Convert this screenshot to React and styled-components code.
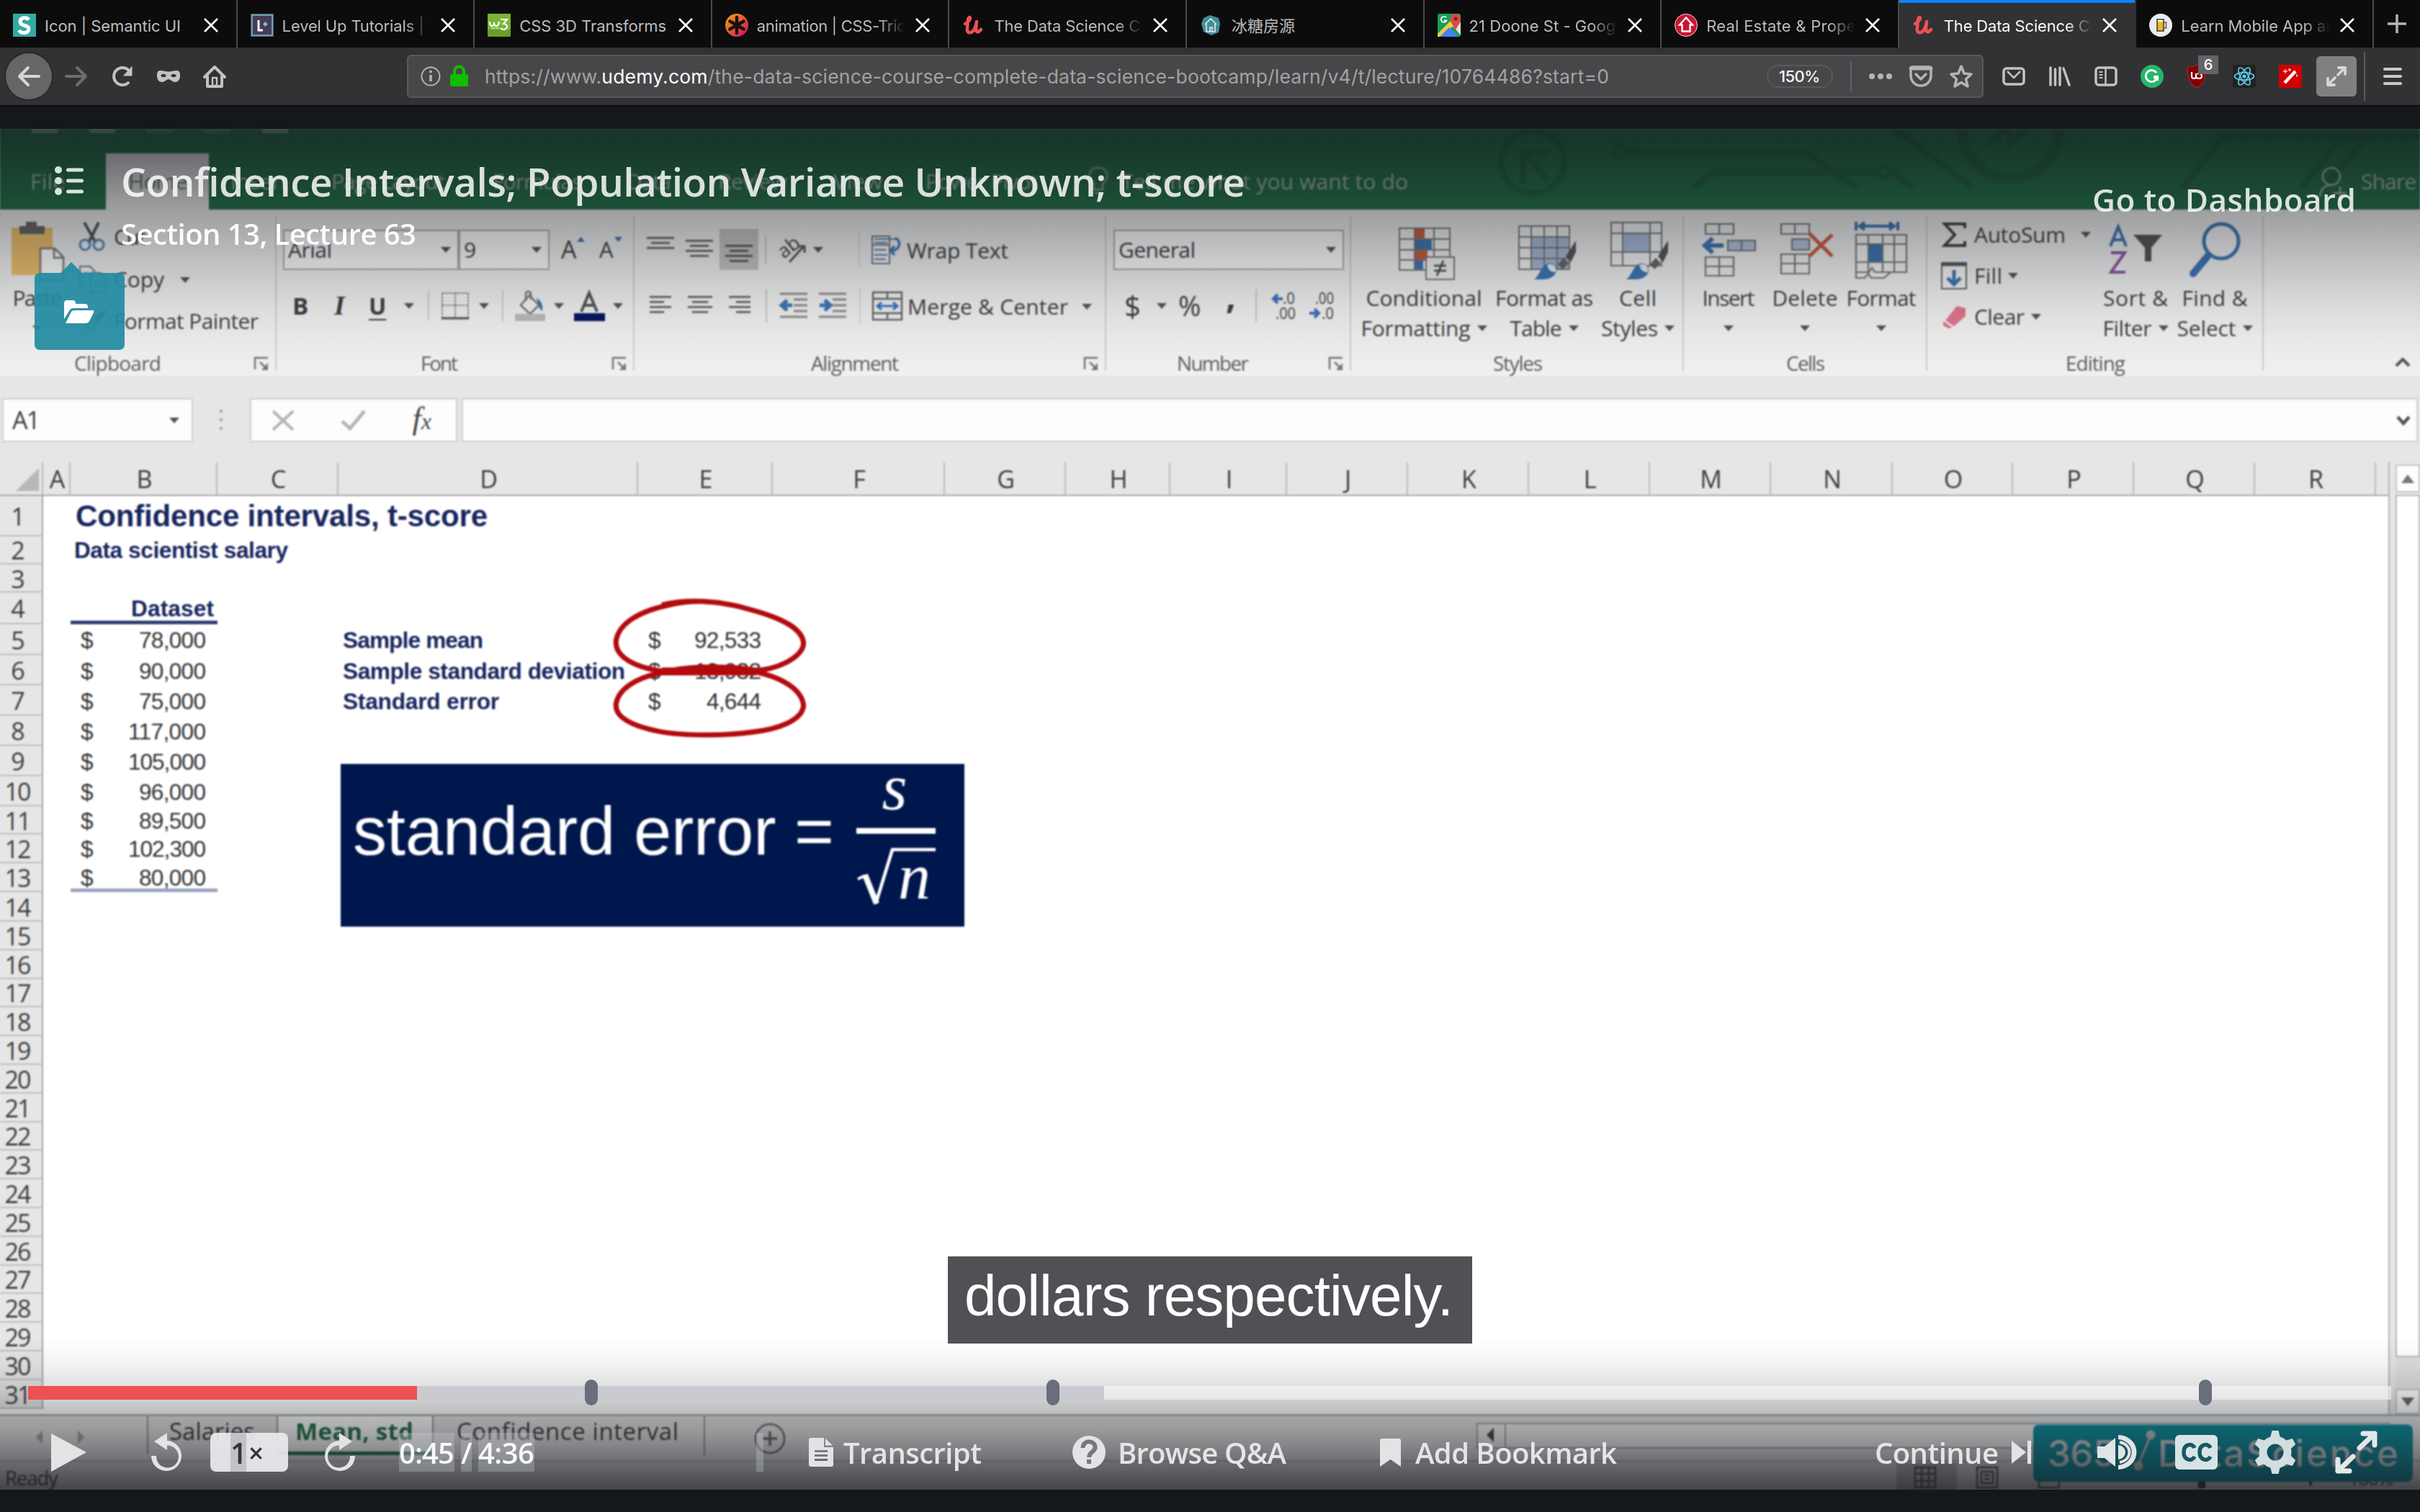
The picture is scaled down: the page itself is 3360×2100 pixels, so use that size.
import React, { useLayoutEffect, useRef } from "react";
import styled, { createGlobalStyle, css } from "styled-components";

const Global = createGlobalStyle`
  * { box-sizing: border-box; }
  body { margin: 0; background: #14171c; overflow: hidden; }
  svg { display: block; flex: none; overflow: visible; }
`;

const ui = '"Inter", "Noto Sans CJK SC", sans-serif';
const office = '"Open Sans", "Noto Sans", sans-serif';
const arial = '"Liberation Sans", Arial, sans-serif';

/* ---------- text that spreads its letters over a known width ---------- */
const FitBox = styled.span`
  display: block;
  flex: none;
  white-space: nowrap;
  ${(p) => p.$w && css`width: ${p.$w}px;`}
  ${(p) => p.$ml && css`margin-left: ${p.$ml}px;`}
`;
function Fit({ w, ml, children, className }) {
  const ref = useRef(null);
  useLayoutEffect(() => {
    const el = ref.current;
    el.style.letterSpacing = "0px";
    const natural = el.getBoundingClientRect().width;
    const gaps = Math.max(1, el.textContent.length - 1);
    el.style.letterSpacing = (w - natural) / gaps + "px";
  }, [w, children]);
  return (
    <FitBox $w={w} $ml={ml} className={className}>
      <span ref={ref}>{children}</span>
    </FitBox>
  );
}

const Page = styled.div`
  width: 3360px;
  height: 2100px;
  display: flex;
  flex-direction: column;
  background: #14171c;
  overflow: hidden;
`;

/* ================= browser chrome ================= */
const TabBar = styled.div`
  height: 66px;
  display: flex;
  background: #0c0c0d;
  font-family: ${ui};
`;
const TabBox = styled.div`
  width: 329.6px;
  height: 66px;
  padding: 4px 25px 0 18px;
  display: flex;
  align-items: center;
  border-right: 2px solid ${(p) => (p.$active ? "transparent" : "#4b4b4d")};
  background: ${(p) => (p.$active ? "#323234" : "#0c0c0d")};
  box-shadow: ${(p) => (p.$active ? "inset 0 4px #0a84ff" : "none")};
  color: ${(p) => (p.$active ? "#f9f9fa" : "#bcbcbe")};
`;
const TabTitle = styled.div`
  width: 214px;
  margin-left: 12px;
  overflow: hidden;
  font-size: 22px;
  line-height: 32px;
  padding-top: 2px;
  mask-image: linear-gradient(90deg, #000 80%, transparent 97%);
  ${(p) => p.$short && css`mask-image: none;`}
`;
const NewTab = styled.div`
  flex: 1;
  display: flex;
  align-items: center;
  justify-content: center;
`;
const CloseX = styled.svg`
  margin-left: 8px;
  stroke: #fff;
  stroke-width: 2.6;
`;

const Toolbar = styled.div`
  height: 82px;
  border-bottom: 2px solid #0c0c0d;
  background: #323234;
  display: flex;
  align-items: center;
  font-family: ${ui};
`;
const Back = styled.div`
  width: 64px;
  height: 64px;
  margin: 0 18px 0 8px;
  border-radius: 50%;
  background: #666667;
  box-shadow: 0 0 0 2px #29292b;
  display: grid;
  place-items: center;
`;
const NavIcons = styled.div`
  display: flex;
  gap: 32px;
  width: 475px;
`;
const UrlBar = styled.div`
  width: 2189px;
  height: 60px;
  border: 2px solid #59595b;
  border-radius: 6px;
  background: #474749;
  display: flex;
  align-items: center;
  padding-left: 17px;
  color: #a2a2a4;
  font-size: 26.500px;
  b { color: #fff; font-weight: 400; }
`;
const LockIcon = styled.svg`
  margin-left: 13px;
`;
const Zoom = styled.div`
  width: 92px;
  height: 32px;
  margin-left: 219px;
  border: 2px solid #58585a;
  border-radius: 16px;
  color: #f4f4f5;
  font-size: 22px;
  font-weight: 500;
  line-height: 29px;
  padding-left: 15px;
`;
const VRule = styled.i`
  display: block;
  flex: none;
  width: 2px;
  height: ${(p) => p.$h}px;
  margin-left: ${(p) => p.$ml || 0}px;
  background: ${(p) => p.$c || "#5c5c60"};
`;
const UrlActions = styled.div`
  display: flex;
  align-items: center;
  gap: 24px;
  margin-left: 24px;
`;
const Extensions = styled.div`
  display: flex;
  align-items: center;
  gap: 32px;
  margin-left: 26px;
`;
const ExtBadge = styled.div`
  position: relative;
  width: 32px;
  height: 34px;
`;
const BadgeCount = styled.span`
  position: absolute;
  left: 16px;
  top: -12px;
  width: 28px;
  height: 26px;
  background: #646466;
  color: #fff;
  font-size: 20px;
  font-weight: 500;
  line-height: 27px;
  text-align: center;
`;
const ExpandBtn = styled.div`
  width: 56px;
  height: 56px;
  margin-left: -12px;
  border-radius: 6px;
  background: #808081;
  display: grid;
  place-items: center;
`;

const UdemyU = () => (
  <svg width="32" height="32" viewBox="0 0 32 32" fill="none" stroke="#ec5252" strokeWidth="4.5" strokeLinecap="round" strokeLinejoin="round">
    <path d="M4 14C8 12 11 8 11 6c0-2-3-1-3 3l-1 10c-1 7 2 8 5 7 4-1 7-8 8-15l-1 10c0 5 3 6 7 1" />
  </svg>
);
const favicons = {
  semantic: (
    <svg width="32" height="32" viewBox="0 0 32 32">
      <rect width="32" height="32" fill="#35aaa3" />
      <path d="M22 8.5C19 4 10 5 10 11c0 7 12 4 12 10 0 7-11 7-13.500 2" fill="none" stroke="#fff" strokeWidth="5" />
    </svg>
  ),
  levelup: (
    <svg width="32" height="32" viewBox="0 0 32 32">
      <rect width="32" height="32" fill="#5c5474" />
      <rect x="2" y="2" width="28" height="28" fill="#453c56" stroke="#6cc5c8" strokeWidth="1.500" />
      <path d="M11 9v14h6" fill="none" stroke="#fff" strokeWidth="3" />
      <path d="M20 11l4 3.500-4 3.500-3-3.500z" fill="#6cc5c8" />
    </svg>
  ),
  w3: (
    <svg width="32" height="32" viewBox="0 0 32 32">
      <rect width="32" height="32" fill="#7ab535" />
      <path d="M0 22h32v10H0z" fill="#689d2c" />
      <path d="M3 11c0 8 6 8 6 1 0 7 6 7 7-1M18 8h9l-5 6c7 0 6 8 0 8-2 0-3-1-4-2" fill="none" stroke="#fff" strokeWidth="2.200" />
      <path d="M5 20h11" stroke="#e6f2d6" strokeWidth="1.500" strokeDasharray="2 1" />
    </svg>
  ),
  tricks: (
    <svg width="32" height="32" viewBox="0 0 32 32">
      <defs>
        <linearGradient id="trk" x1="0" y1="0" x2="1" y2="1">
          <stop offset=".2" stopColor="#f08a12" />
          <stop offset=".85" stopColor="#d8195f" />
        </linearGradient>
      </defs>
      <circle cx="16" cy="16" r="16" fill="url(#trk)" />
      <path d="M16 5v22M6.500 10.500l19 11M25.500 10.500l-19 11" stroke="#16100c" strokeWidth="4.500" strokeLinecap="round" />
    </svg>
  ),
  udemy: <UdemyU />,
  house: (
    <svg width="32" height="32" viewBox="0 0 32 32">
      <path d="M14 2l12 4 2 8-2 12-10 4-11-5-3-11 3-8z" fill="#438c96" />
      <path d="M7 15l8-8 8 8M9 14v11h12V14M14 25v-6h3v6" fill="none" stroke="#d9eef0" strokeWidth="1.600" />
    </svg>
  ),
  maps: (
    <svg width="32" height="32" viewBox="0 0 32 32">
      <rect width="32" height="32" rx="3" fill="#1c9d58" />
      <path d="M0 28L20 8l3 8L4 32H0z" fill="#f6c944" />
      <path d="M20 16l12 14V12h-8z" fill="#dfdfdf" />
      <path d="M16 19L3 32h27z" fill="#4484f3" />
      <path d="M25 24c-1-7-7-9-7-16a7 8 0 0 1 14 0c0 7-6 9-7 16z" fill="#dc4a3d" />
      <circle cx="25" cy="7" r="2.600" fill="#7c231c" />
      <path d="M12 5.500a4 4 0 1 0 .5 4H8.500" fill="none" stroke="#fff" strokeWidth="1.700" />
    </svg>
  ),
  realestate: (
    <svg width="32" height="32" viewBox="0 0 32 32">
      <circle cx="16" cy="16" r="15.500" fill="#ca1430" stroke="#f3d8dc" />
      <path d="M16 5.500L7 15.500h3.500v9h11v-9H25z" fill="none" stroke="#fff" strokeWidth="2.400" />
    </svg>
  ),
  beer: (
    <svg width="32" height="32" viewBox="0 0 32 32">
      <circle cx="16" cy="16" r="16" fill="#ebebeb" />
      <rect x="11" y="8" width="9" height="16" fill="#f0b71c" stroke="#333" strokeWidth="1.500" />
      <path d="M12 10h7" stroke="#fff" strokeWidth="2.500" />
      <path d="M20 12h3.500v8H20" fill="none" stroke="#555" strokeWidth="1.500" />
    </svg>
  ),
};

const tabs = [
  ["semantic", "Icon | Semantic UI", 189],
  ["levelup", "Level Up Tutorials | V", 218],
  ["w3", "CSS 3D Transforms", 204],
  ["tricks", "animation | CSS-Tricks", 230],
  ["udemy", "The Data Science Co", 216],
  ["house", "冰糖房源", 88],
  ["maps", "21 Doone St - Google", 222],
  ["realestate", "Real Estate & Proper", 216],
  ["udemy", "The Data Science Co", 216, true],
  ["beer", "Learn Mobile App an", 214],
];

function Browser() {
  return (
    <>
      <TabBar>
        {tabs.map(([icon, title, w, active], i) => (
          <TabBox key={i} $active={active}>
            {favicons[icon]}
            <TabTitle $short={w < 210}><Fit w={w}>{title}</Fit></TabTitle>
            <CloseX width="20" height="20" viewBox="0 0 20 20"><path d="M1 1l18 18M19 1L1 19" /></CloseX>
          </TabBox>
        ))}
        <NewTab>
          <svg width="28" height="28" viewBox="0 0 28 28"><path d="M14 1v26M1 14h26" stroke="#b4b4b6" strokeWidth="3.500" /></svg>
        </NewTab>
      </TabBar>
      <Toolbar>
        <Back>
          <svg width="32" height="32" viewBox="0 0 32 32" fill="none" stroke="#d6d6d7" strokeWidth="4" strokeLinecap="round" strokeLinejoin="round"><path d="M30 16H3M15 4L3 16l12 12" /></svg>
        </Back>
        <NavIcons>
          <svg width="32" height="32" viewBox="0 0 32 32" fill="none" stroke="#6d6d6f" strokeWidth="4" strokeLinecap="round" strokeLinejoin="round"><path d="M2 16h27M17 4l12 12-12 12" /></svg>
          <svg width="32" height="32" viewBox="0 0 32 32" fill="none" stroke="#c2c2c3" strokeWidth="4" strokeLinecap="round"><path d="M24 25a12 12 0 1 1 1-17" /><path d="M29 3v12H18z" fill="#c2c2c3" strokeWidth="1" /></svg>
          <svg width="32" height="32" viewBox="0 0 32 32"><path fillRule="evenodd" fill="#c2c2c3" d="M0 15c0-5 1-7 5-7s7 1.500 11 1.500S23 8 27 8s5 2 5 7c0 6-3 9-7 9-4 0-6-4-9-4s-5 4-9 4c-4 0-7-3-7-9zm5 0c2 3 6 3 8 0-2-3-6-3-8 0zm14 0c2 3 6 3 8 0-2-3-6-3-8 0z" /></svg>
          <svg width="32" height="32" viewBox="0 0 32 32" fill="none" stroke="#c2c2c3" strokeWidth="4" strokeLinejoin="round" strokeLinecap="round"><path d="M2 17L16 3l14 14M6 16v14h20V16" /><rect x="13" y="18" width="6" height="11" strokeWidth="2.500" /></svg>
        </NavIcons>
        <UrlBar>
          <svg width="28" height="28" viewBox="0 0 28 28" fill="none" stroke="#b4b4b6" strokeWidth="2"><circle cx="14" cy="14" r="12.500" /><path d="M14 12v9" strokeWidth="3.500" /><circle cx="14" cy="7.500" r="2" fill="#b4b4b6" stroke="none" /></svg>
          <LockIcon width="26" height="30" viewBox="0 0 26 30"><path d="M6 13V8a6.500 6.500 0 0 1 13 0v5" fill="none" stroke="#12bc00" strokeWidth="4" /><rect y="12" width="25" height="17" rx="2.500" fill="#12bc00" /></LockIcon>
          <Fit w={1561} ml={22}>https://www.<b>udemy.com</b>/the-data-science-course-complete-data-science-bootcamp/learn/v4/t/lecture/10764486?start=0</Fit>
          <Zoom><Fit w={57}>150%</Fit></Zoom>
          <VRule $h={42} $ml={24} $c="#5a6072" />
          <UrlActions>
            <svg width="32" height="32" viewBox="0 0 32 32" fill="#b4b4b6"><circle cx="4" cy="16" r="4" /><circle cx="16" cy="16" r="4" /><circle cx="28" cy="16" r="4" /></svg>
            <svg width="32" height="32" viewBox="0 0 32 32" fill="none" stroke="#b4b4b6" strokeWidth="3.500" strokeLinecap="round" strokeLinejoin="round"><path d="M2 5c0-1 1-2 2-2h24c1 0 2 1 2 2v10a14 14 0 0 1-28 0z" /><path d="M2 5h28" strokeWidth="5" /><path d="M9 13l7 7 7-7" /></svg>
            <svg width="32" height="32" viewBox="0 0 32 32" fill="none" stroke="#b4b4b6" strokeWidth="3.500" strokeLinejoin="round"><path d="M16 2l4 10 10 1-7.500 7L25 30l-9-5.500L7 30l2.500-10L2 13l10-1z" /></svg>
          </UrlActions>
        </UrlBar>
        <Extensions>
          <svg width="32" height="32" viewBox="0 0 32 32" fill="none" stroke="#c2c2c3" strokeWidth="3.500" strokeLinejoin="round"><rect x="2" y="5" width="28" height="22" rx="4" /><path d="M7 9l9 9 9-9" strokeWidth="2.500" /></svg>
          <svg width="32" height="32" viewBox="0 0 32 32" fill="none" stroke="#c2c2c3" strokeWidth="3.500" strokeLinecap="round"><path d="M3 4v24M9.500 6v22M16 4v24M21 5l8 23" /></svg>
          <svg width="32" height="32" viewBox="0 0 32 32" fill="none" stroke="#c2c2c3" strokeWidth="3.500"><rect x="2" y="4" width="28" height="24" rx="4" /><path d="M15.500 4v24" strokeWidth="2.500" /><path d="M6.500 10h5M6.500 14h5M6.500 18h5" strokeWidth="2" /></svg>
          <svg width="32" height="32" viewBox="0 0 32 32"><circle cx="16" cy="16" r="16" fill="#27b56d" /><path d="M22 11a8 8 0 1 0 1 7h-5" fill="none" stroke="#fff" strokeWidth="2.800" /><path d="M24 22v-6h-6" fill="none" stroke="#fff" strokeWidth="2" /></svg>
          <ExtBadge>
            <svg width="28" height="34" viewBox="0 0 28 34"><path d="M14 1c5 3 9 3 13 3 0 14-2 23-13 29C3 27 1 18 1 4c4 0 8 0 13-3z" fill="#800000" stroke="#a33" strokeWidth="1" /><path d="M7 11v6c0 4 6 4 6 0v-4 4c0 4 8 4 8 0s-4-5-6-3" fill="none" stroke="#fff" strokeWidth="2.200" /></svg>
            <BadgeCount>6</BadgeCount>
          </ExtBadge>
          <svg width="32" height="32" viewBox="0 0 32 32"><rect width="32" height="32" rx="3" fill="#212121" /><g fill="none" stroke="#5ccfee" strokeWidth="1.700"><ellipse cx="16" cy="16" rx="13.500" ry="5.200" /><ellipse cx="16" cy="16" rx="13.500" ry="5.200" transform="rotate(60 16 16)" /><ellipse cx="16" cy="16" rx="13.500" ry="5.200" transform="rotate(120 16 16)" /></g><circle cx="16" cy="16" r="2.600" fill="#5ccfee" /></svg>
          <svg width="32" height="32" viewBox="0 0 32 32"><rect width="32" height="32" rx="2" fill="#cf0000" /><path d="M8 25L23 9" stroke="#fff" strokeWidth="4.500" /><path d="M9 6v6M6 9h6M15 5v4M13 7h4M25 13v4" stroke="#ffd0d0" strokeWidth="1.400" /></svg>
          <ExpandBtn>
            <svg width="30" height="30" viewBox="0 0 30 30" fill="none" stroke="#d6d6d7" strokeWidth="3.800" strokeLinecap="round" strokeLinejoin="round"><path d="M17 13L27 3M18 3h9v9M13 17L3 27M3 18v9h9" /></svg>
          </ExpandBtn>
        </Extensions>
        <VRule $h={68} $ml={10} />
        <svg width="76" height="28" viewBox="0 0 76 28"><path d="M27 4h22M27 14h22M27 24h22" stroke="#c9c9ca" strokeWidth="4" strokeLinecap="round" /></svg>
      </Toolbar>
    </>
  );
}

/* ================= spreadsheet inside the video ================= */
const Stage = styled.main`
  position: relative;
  height: 1890px;
  margin-top: 31px;
  overflow: hidden;
  background: #e6e6e6;
`;
const Excel = styled.div`
  height: 1890px;
  display: flex;
  flex-direction: column;
  font-family: ${office};
  color: #3f3f3f;
  filter: blur(0.8px);
`;
const GreenBar = styled.header`
  position: relative;
  height: 112px;
  flex: none;
  background: #217346;
  overflow: hidden;
`;
const Circuit = styled.svg`
  position: absolute;
  left: 0;
  top: 0;
  fill: none;
  stroke: #1d653f;
`;
const QuickIcons = styled.div`
  display: flex;
  height: 34px;
  padding-left: 44px;
  gap: 44px;
`;
const QuickIcon = styled.i`
  width: 36px;
  height: 6px;
  background: ${(p) => (p.$dim ? "#5c937a" : "#a4c4b4")};
  opacity: 0.7;
`;
const RibbonTabs = styled.nav`
  display: flex;
  height: 78px;
  font-size: 30px;
  line-height: 78px;
  color: #a9c3b5;
  position: relative;
`;
const HomeTab = styled.div`
  width: 143px;
  margin-left: 57px;
  padding-left: 31px;
  background: #f1f1f1;
  color: #6b7f75;
`;
const ShareIcon = styled.svg`
  margin-left: 1265px;
`;

const Ribbon = styled.section`
  height: 231px;
  flex: none;
  background: #f1f1f1;
  display: flex;
  font-size: 30px;
`;
const GroupBox = styled.div`
  width: ${(p) => p.$w}px;
  flex: none;
  display: flex;
  flex-direction: column;
  background: linear-gradient(#cfcfcf, #cfcfcf) right 0 top 10px / 2px 214px no-repeat;
`;
const GroupBody = styled.div`
  height: 193px;
  display: flex;
`;
const GroupLabel = styled.div`
  height: 38px;
  display: flex;
  align-items: center;
  justify-content: space-between;
  padding: 3px 10px 0 ${(p) => p.$pl}px;
  font-size: 28px;
  line-height: 35px;
  color: #5e5e5e;
`;
const Launcher = () => (
  <svg width="22" height="20" viewBox="0 0 22 20" fill="none" stroke="#777" strokeWidth="2.500"><path d="M2 18V2h18" /><path d="M9 8l10 10" /><path d="M20 9v10H11z" fill="#777" stroke="none" /></svg>
);
function Group({ w, label, lw, pl, launcher, children }) {
  return (
    <GroupBox $w={w}>
      <GroupBody>{children}</GroupBody>
      <GroupLabel $pl={pl}><Fit w={lw}>{label}</Fit>{launcher && <Launcher />}</GroupLabel>
    </GroupBox>
  );
}
const ArrowSvg = styled.svg`
  margin-left: ${(p) => p.$ml || 0}px;
  margin-top: ${(p) => p.$mt || 0}px;
`;
const Arrow = ({ ml, mt, c = "#555" }) => (
  <ArrowSvg $ml={ml} $mt={mt} width="14" height="8" viewBox="0 0 14 8"><path d="M0 0h14L7 8z" fill={c} /></ArrowSvg>
);
const Item = styled.div`
  flex: none;
  margin-left: ${(p) => p.$ml || 0}px;
  width: ${(p) => p.$w}px;
`;
const ListCol = styled.div`
  padding-top: ${(p) => p.$pt || 9}px;
  margin-left: ${(p) => p.$ml}px;
  width: ${(p) => p.$w}px;
  flex: none;
`;
const ListRow = styled.div`
  height: ${(p) => p.$h || 58.5}px;
  display: flex;
  align-items: center;
  line-height: 40px;
`;
const BigButton = styled.div`
  width: ${(p) => p.$w}px;
  margin-left: ${(p) => p.$ml}px;
  flex: none;
  padding-top: 17px;
  display: flex;
  flex-direction: column;
  align-items: center;
  line-height: 42px;
`;
const BigIcon = styled.div`
  height: 80px;
  margin-bottom: 5px;
`;
const Line = styled.div`
  height: 42px;
  display: flex;
  align-items: center;
  gap: 9px;
`;
const TwoRows = styled.div`
  padding-top: 28px;
  display: flex;
  flex-direction: column;
  gap: 23px;
`;
const Tools = styled.div`
  height: 55px;
  display: flex;
  align-items: center;
  line-height: 55px;
`;
const ToolText = styled(Fit)`
  padding-top: 2px;
`;
const Combo = styled.div`
  width: ${(p) => p.$w}px;
  height: 56px;
  margin-left: ${(p) => p.$ml || 0}px;
  border: 2px solid #ababab;
  background: #fff;
  display: flex;
  align-items: center;
  justify-content: space-between;
  padding: 0 9px 0 5px;
  line-height: 52px;
`;
const Letter = styled.span`
  width: ${(p) => p.$w}px;
  margin-left: ${(p) => p.$ml || 0}px;
  margin-top: ${(p) => p.$mt || 0}px;
  flex: none;
  font-size: ${(p) => p.$s || 33}px;
  ${(p) => p.$b && css`font-weight: 700;`}
  ${(p) => p.$i && css`font-style: italic; font-family: "Liberation Serif", serif; font-weight: 700;`}
  ${(p) => p.$u && css`text-decoration: underline; text-underline-offset: 6px; text-decoration-thickness: 2px;`}
  ${(p) => p.$c && css`color: ${p.$c};`}
`;
const Selected = styled.div`
  width: 54px;
  height: 57px;
  margin-left: 9px;
  background: #c5c5c5;
  display: grid;
  place-items: center;
  padding-top: 14px;
`;

const Bars = ({ widths, step = 7, w = 38, align = "c", c = "#666" }) => (
  <svg width={w} height={widths.length * step} viewBox={`0 0 ${w} ${widths.length * step}`}>
    {widths.map((v, i) => (
      <rect key={i} x={align === "l" ? 0 : align === "r" ? w - v : (w - v) / 2} y={i * step} width={v} height="2.800" fill={c} />
    ))}
  </svg>
);
const Indent = ({ right }) => (
  <svg width="38" height="38" viewBox="0 0 38 38"><path d="M0 2h38M19 10h19M19 18h19M19 26h19M0 34h38" stroke="#8c8c8c" strokeWidth="3" /><path d={right ? "M1 18h13M8 11l8 7-8 7" : "M17 18H4M10 11l-8 7 8 7"} fill="none" stroke="#3d76b4" strokeWidth="5" /></svg>
);
const Decimals = ({ up }) => (
  <svg width="34" height="40" viewBox="0 0 34 40" fontFamily="Open Sans, sans-serif" fontSize="21" fill="#444">
    {up ? <text x="15" y="17" textLength="17" lengthAdjust="spacingAndGlyphs">.0</text> : <text x="8" y="17" textLength="26" lengthAdjust="spacingAndGlyphs">.00</text>}
    {up ? <text x="5" y="38" textLength="28" lengthAdjust="spacingAndGlyphs">.00</text> : <text x="17" y="38" textLength="17" lengthAdjust="spacingAndGlyphs">.0</text>}
    <path d={up ? "M15 10H3M8 4l-6 6 6 6" : "M0 30h12M7 24l6 6-6 6"} fill="none" stroke="#3f74bd" strokeWidth="4" />
  </svg>
);
const Brush = () => (
  <g>
    <path d="M80 26L66 48l7 8 7-14z" fill="#555" />
    <path d="M63 50l-8 9 6 7 9-8z" fill="#666" />
    <path d="M22 80c8-4 10-24 24-22 12 3 8 18-4 21-6 1.500-12 1-20 1z" fill="#3d76b4" />
    <path d="M40 60c2 8 6 10 12 10 2-8-4-14-12-10z" fill="#eef3f8" />
  </g>
);

function RibbonArea() {
  return (
    <Ribbon>
      <Group w={384} label="Clipboard" lw={121} pl={103} launcher>
        <BigButton $w={74} $ml={15}>
          <BigIcon>
            <svg width="72" height="80" viewBox="0 0 72 80"><path d="M0 8h57v66H0z" fill="#eec06a" /><path d="M11 6h9V0h15v6h11v11H11z" fill="#666" /><path d="M40 37h20l12 12v32H40z" fill="#fff" stroke="#777" strokeWidth="2.500" /><path d="M59 37v13h13" fill="none" stroke="#777" strokeWidth="2.500" /></svg>
          </BigIcon>
          <Line><Fit w={69}>Paste</Fit></Line>
          <Line><Arrow /></Line>
        </BigButton>
        <ListCol $ml={21} $w={260}>
          <ListRow>
            <svg width="36" height="40" viewBox="0 0 36 40" fill="none" strokeWidth="3"><path d="M7 0l16 28M27 0L13 28" stroke="#555" strokeWidth="4" /><circle cx="8" cy="31" r="7" stroke="#4f87bf" /><circle cx="27" cy="31" r="7" stroke="#4f87bf" /></svg>
            <Fit w={45} ml={12}>Cut</Fit>
          </ListRow>
          <ListRow>
            <svg width="38" height="38" viewBox="0 0 38 38" fill="#eef3f8" stroke="#777" strokeWidth="2"><path d="M1 1h14l6 6v21H1z" /><path d="M16 10h14l7 7v20H16z" /><path d="M5 10h9M5 16h9M20 22h12M20 28h12" stroke="#5b8fc4" /></svg>
            <Fit w={70} ml={10}>Copy</Fit><Arrow ml={22} mt={2} />
          </ListRow>
          <ListRow>
            <svg width="38" height="32" viewBox="0 0 38 32"><path d="M6 20l10-8 10 10-8 10-12-4z" fill="#e6bf7b" /><path d="M20 12l8-8 6 6-8 8z" fill="#666" /><path d="M30 5l5-5 3 3-5 5z" fill="#555" /></svg>
            <Fit w={201} ml={10}>Format Painter</Fit>
          </ListRow>
        </ListCol>
      </Group>

      <Group w={497} label="Font" lw={52} pl={200} launcher>
        <TwoRows>
          <Tools>
            <Combo $w={244} $ml={9}><Fit w={61}>Arial</Fit><Arrow /></Combo>
            <Combo $w={126}><span>9</span><Arrow /></Combo>
            <Letter $w={22} $ml={16} $s={34}>A</Letter>
            <svg width="12" height="36" viewBox="0 0 12 36"><path d="M0 7h11L5.500 0z" fill="#3d76b4" /></svg>
            <Letter $w={21} $ml={19} $s={31}>A</Letter>
            <svg width="12" height="36" viewBox="0 0 12 36"><path d="M0 0h11L5.500 7z" fill="#3d76b4" /></svg>
          </Tools>
          <Tools>
            <Letter $w={58} $ml={22} $b>B</Letter>
            <Letter $w={48} $i $s={38}>I</Letter>
            <Letter $w={40} $b $u $s={32}>U</Letter>
            <Arrow ml={9} />
            <VRule $h={40} $ml={19} $c="#cdcdcd" />
            <Item $ml={17} $w={38}>
              <svg width="38" height="38" viewBox="0 0 38 38" fill="none" stroke="#888" strokeWidth="2"><path d="M1 1h36v34M1 1v34M19 1v34M1 18h36" strokeDasharray="3 1.500" /><path d="M0 36h38" stroke="#555" strokeWidth="3" /></svg>
            </Item>
            <Arrow ml={14} />
            <VRule $h={44} $ml={18} $c="#cdcdcd" />
            <Item $ml={16} $w={42}>
              <svg width="42" height="42" viewBox="0 0 42 42"><path d="M20 6l13 14-12 12L8 20z" fill="#f4f4f4" stroke="#777" strokeWidth="2.500" /><path d="M15 14V4c0-4 7-4 7 0v8" fill="none" stroke="#777" strokeWidth="2.500" /><path d="M30 10c7 4 9 10 8 18-3-2-5-5-6-10z" fill="#3d76b4" /><rect y="32" width="42" height="10" fill="#bdbdbd" /></svg>
            </Item>
            <Arrow ml={12} />
            <Item $ml={14} $w={43}>
              <svg width="43" height="42" viewBox="0 0 43 42"><path d="M10 29L21 3l11 26M14 20h14" fill="none" stroke="#555" strokeWidth="4" /><rect y="31" width="43" height="11" fill="#06175f" /></svg>
            </Item>
            <Arrow ml={11} />
          </Tools>
        </TwoRows>
      </Group>

      <Group w={655} label="Alignment" lw={122} pl={245} launcher>
        <TwoRows>
          <Tools>
            <Item $ml={17} $w={38}><Bars widths={[38, 26, 38, 0, 0]} /></Item>
            <Item $ml={16} $w={38}><Bars widths={[38, 26, 38, 26]} /></Item>
            <Selected><Bars widths={[38, 26, 38, 26]} c="#555" /></Selected>
            <VRule $h={38} $ml={9} $c="#c8c8c8" />
            <Item $ml={16} $w={42}>
              <svg width="42" height="38" viewBox="0 0 42 38"><text x="2" y="26" fontFamily="Open Sans, sans-serif" fontSize="27" fill="#444" transform="rotate(-38 14 20)">ab</text><path d="M16 36L36 14M27 14h10v9" fill="none" stroke="#555" strokeWidth="3" /></svg>
            </Item>
            <Arrow ml={7} />
            <VRule $h={50} $ml={49} $c="#dcdcdc" />
            <Item $ml={16} $w={42}>
              <svg width="42" height="40" viewBox="0 0 42 40" fill="none" strokeWidth="2"><rect x="1" y="1" width="24" height="38" stroke="#777" fill="#f2f2f2" /><path d="M1 13h24" stroke="#777" /><path d="M4 5h30M4 10h18M4 20h16M4 27h18M4 33h16" stroke="#4b82bd" /><path d="M33 4c8 2 8 16-4 17M32 15l-6 6 6 6" stroke="#3d76b4" strokeWidth="3.500" /></svg>
            </Item>
            <ToolText w={141} ml={7}>Wrap Text</ToolText>
          </Tools>
          <Tools>
            <Item $ml={21} $w={30}><Bars widths={[30, 20, 30, 20]} align="l" w={30} /></Item>
            <Item $ml={23} $w={34}><Bars widths={[34, 22, 34, 22]} w={34} /></Item>
            <Item $ml={23} $w={30}><Bars widths={[30, 20, 30, 20]} align="r" w={30} /></Item>
            <VRule $h={46} $ml={21} $c="#c8c8c8" />
            <Item $ml={18} $w={38}><Indent /></Item>
            <Item $ml={16} $w={38}><Indent right /></Item>
            <VRule $h={50} $ml={18} $c="#dcdcdc" />
            <Item $ml={16} $w={42}>
              <svg width="42" height="40" viewBox="0 0 42 40" fill="none" stroke="#666" strokeWidth="2.400"><rect x="1" y="1" width="40" height="38" /><path d="M1 10h40M1 30h40M21 1v9M21 30v9" /><path d="M8 20h26M13 15l-6 5 6 5M29 15l6 5-6 5" stroke="#3f74bd" strokeWidth="3" /></svg>
            </Item>
            <ToolText w={223} ml={7}>Merge &amp; Center</ToolText>
            <Arrow ml={19} mt={2} />
          </Tools>
        </TwoRows>
      </Group>

      <Group w={340} label="Number" lw={100} pl={98} launcher>
        <TwoRows>
          <Tools>
            <Combo $w={320} $ml={10}><Fit w={107}>General</Fit><Arrow /></Combo>
          </Tools>
          <Tools>
            <Letter $w={24} $ml={25} $s={40}>$</Letter>
            <Arrow ml={21} />
            <Letter $w={36} $ml={16} $s={38}>%</Letter>
            <Letter $w={16} $ml={30} $mt={-28} $s={48} $b>,</Letter>
            <VRule $h={46} $ml={25} $c="#c8c8c8" />
            <Item $ml={21} $w={34}><Decimals up /></Item>
            <Item $ml={18} $w={34}><Decimals /></Item>
          </Tools>
        </TwoRows>
      </Group>

      <Group w={462} label="Styles" lw={69} pl={197}>
        <BigButton $w={178} $ml={12}>
          <BigIcon>
            <svg width="71" height="80" viewBox="0 0 71 80"><path d="M1 9h70v58H1z" fill="#f4f4f4" /><path d="M22 9h14v14H22zM22 39h18v14H22z" fill="#d05a3c" /><path d="M22 24h24v14H22zM22 54h12v13H22z" fill="#3d76b4" /><path d="M1 9h70v58H1zM22 9v58M49 9v58M1 24h70M1 39h70M1 53h70" fill="none" stroke="#777" strokeWidth="2" /><rect x="38" y="49" width="39" height="31" fill="#f2f2f2" stroke="#777" strokeWidth="2" /><path d="M49 61h17M49 68h17M62 54l-9 21" stroke="#444" strokeWidth="2.500" /></svg>
          </BigIcon>
          <Line><Fit w={161}>Conditional</Fit></Line>
          <Line><Fit w={152}>Formatting</Fit><Arrow /></Line>
        </BigButton>
        <BigButton $w={146} $ml={5}>
          <BigIcon>
            <svg width="73" height="80" viewBox="0 0 73 80"><path d="M1 6h70v60H1z" fill="#f4f4f4" /><path d="M18 21h53v45H18z" fill="#a9bbda" /><path d="M1 6h70v60H1zM18 6v60M36 6v60M54 6v60M1 21h70M1 36h70M1 51h70" fill="none" stroke="#777" strokeWidth="2" /><Brush /></svg>
          </BigIcon>
          <Line><Fit w={136}>Format as</Fit></Line>
          <Line><Fit w={72}>Table</Fit><Arrow /></Line>
        </BigButton>
        <BigButton $w={102} $ml={6}>
          <BigIcon>
            <svg width="77" height="80" viewBox="0 0 77 80"><path d="M1 1h70v60H1z" fill="#f4f4f4" /><path d="M17 16h38v26H17z" fill="#a9bbda" /><path d="M1 1h70v60H1zM17 1v60M55 1v60M1 16h70M1 42h70" fill="none" stroke="#777" strokeWidth="2" /><Brush /></svg>
          </BigIcon>
          <Line><Fit w={52}>Cell</Fit></Line>
          <Line><Fit w={79}>Styles</Fit><Arrow /></Line>
        </BigButton>
      </Group>

      <Group w={338} label="Cells" lw={54} pl={142}>
        <BigButton $w={90} $ml={17}>
          <BigIcon>
            <svg width="76" height="80" viewBox="0 0 76 80" fill="#f2f2f2" stroke="#777" strokeWidth="2.200"><path d="M6 3h39v14H6zM25 3v14M6 49h39v26H6zM25 49v26M6 62h39" /><path d="M37 26h38v14H37zM56 26v14" fill="#b5c4dd" /><path d="M31 33H6M16 23L5 33l11 10" fill="none" stroke="#3d76b4" strokeWidth="6" /></svg>
          </BigIcon>
          <Line><Fit w={73}>Insert</Fit></Line>
          <Line><Arrow /></Line>
        </BigButton>
        <BigButton $w={100} $ml={11}>
          <BigIcon>
            <svg width="69" height="80" viewBox="0 0 69 80" fill="#f2f2f2" stroke="#777" strokeWidth="2.200"><path d="M1 3h39v14H1zM20 3v14M1 45h39v27H1zM20 45v27M1 58h39" /><path d="M16 24h24v15H16z" fill="#b5c4dd" /><path d="M40 16l32 32M72 18L40 48" fill="none" stroke="#d05a3c" strokeWidth="5" /></svg>
          </BigIcon>
          <Line><Fit w={91}>Delete</Fit></Line>
          <Line><Arrow /></Line>
        </BigButton>
        <BigButton $w={104} $ml={4}>
          <BigIcon>
            <svg width="72" height="80" viewBox="0 0 72 80" fill="#f4f4f4" stroke="#777" strokeWidth="2.200"><path d="M1 18h70v52H1zM18 18v52M54 18v52M38 18v52M1 31h70M1 56h70" /><path d="M19 32h18v23H19z" fill="#3d76b4" stroke="none" /><path d="M1 70h18l4-6 4 6h22l-9 8H22l-4-6-5 6H1z" /><path d="M1 0v12M59 0v12M6 6h48M13 1L6 6l7 5M47 1l7 5-7 5" fill="none" stroke="#3d76b4" strokeWidth="4" /></svg>
          </BigIcon>
          <Line><Fit w={97}>Format</Fit></Line>
          <Line><Arrow /></Line>
        </BigButton>
      </Group>

      <Group w={467} label="Editing" lw={83} pl={192}>
        <ListCol $ml={19} $w={217} $pt={6}>
          <ListRow $h={57}>
            <svg width="36" height="34" viewBox="0 0 36 34" fill="none" stroke="#444" strokeWidth="4"><path d="M33 8V2H5l14 15L5 32h28v-6" /></svg>
            <Fit w={127} ml={10}>AutoSum</Fit><Arrow ml={21} />
          </ListRow>
          <ListRow $h={57}>
            <svg width="36" height="38" viewBox="0 0 36 38" fill="none"><rect x="1" y="1" width="34" height="36" fill="#f4f4f4" stroke="#666" strokeWidth="2" /><path d="M0 3h36" stroke="#555" strokeWidth="5" /><path d="M18 11v19M9 22l9 9 9-9" stroke="#3d76b4" strokeWidth="5" /></svg>
            <Fit w={39} ml={10}>Fill</Fit><Arrow ml={8} />
          </ListRow>
          <ListRow $h={57}>
            <svg width="36" height="32" viewBox="0 0 36 32"><path d="M22 1l12 3v11L18 29 6 21z" fill="#e5758c" /><path d="M3 22l13 9-6 1-7-4z" fill="#e5758c" /></svg>
            <Fit w={70} ml={10}>Clear</Fit><Arrow ml={9} />
          </ListRow>
        </ListCol>
        <BigButton $w={106} $ml={0}>
          <BigIcon>
            <svg width="74" height="80" viewBox="0 0 74 80"><path d="M2 34L13 7l11 27M6 25h14" fill="none" stroke="#3d76b4" strokeWidth="4" /><path d="M3 43h19L3 70h20" fill="none" stroke="#8a55ac" strokeWidth="4" /><path d="M34 18h40L59 36v19h-9V36z" fill="#555" /></svg>
          </BigIcon>
          <Line><Fit w={90}>Sort &amp;</Fit></Line>
          <Line><Fit w={68}>Filter</Fit><Arrow /></Line>
        </BigButton>
        <BigButton $w={108} $ml={3}>
          <BigIcon>
            <svg width="72" height="80" viewBox="0 0 72 80" fill="none" stroke="#3d76b4"><path d="M26 48L6 72" strokeWidth="10" strokeLinecap="round" /><circle cx="45" cy="27" r="24" strokeWidth="5" fill="#f4f4f4" /></svg>
          </BigIcon>
          <Line><Fit w={91}>Find &amp;</Fit></Line>
          <Line><Fit w={82}>Select</Fit><Arrow /></Line>
        </BigButton>
      </Group>
      <RibbonEnd>
        <svg width="22" height="14" viewBox="0 0 22 14"><path d="M2 12l9-9 9 9" fill="none" stroke="#555" strokeWidth="4" /></svg>
      </RibbonEnd>
    </Ribbon>
  );
}
const RibbonEnd = styled.div`
  flex: 1;
  display: flex;
  align-items: flex-end;
  justify-content: flex-end;
  padding: 0 13px 12px 0;
`;

const FormulaBar = styled.section`
  height: 120px;
  flex: none;
  padding: 31px 0 0 3px;
  display: flex;
  background: #e6e6e6;
  font-size: 34px;
`;
const WhiteBox = styled.div`
  width: ${(p) => p.$w}px;
  height: 61px;
  margin-left: ${(p) => p.$ml || 0}px;
  padding: 0 ${(p) => p.$pr || 0}px 0 ${(p) => p.$pl || 0}px;
  border: 2px solid #d0d0d0;
  background: #fdfdfd;
  display: flex;
  align-items: center;
  justify-content: space-between;
  line-height: 57px;
`;
const Fx = styled.span`
  font: italic 400 44px/54px "Liberation Serif", serif;
  color: #444;
  small { font-size: 32px; }
`;
const Grip = styled.div`
  width: 78px;
  display: flex;
  justify-content: center;
  padding-top: 16px;
`;

const SheetArea = styled.section`
  display: flex;
  height: 1322px;
  flex: none;
`;
const Sheet = styled.div`
  position: relative;
  width: 3318px;
  background: #fff;
  border-right: 2px solid #b5b5b5;
`;
const ColHeads = styled.div`
  height: 47px;
  display: flex;
  background: #e6e6e6;
  border-bottom: 2px solid #a8a8a8;
  font-size: 34px;
  line-height: 47px;
`;
const ColHead = styled.div`
  width: ${(p) => p.$w}px;
  flex: none;
  padding-left: 3px;
  border-right: 2px solid #bcbcbc;
  text-align: center;
`;
const Corner = styled.div`
  width: 60px;
  flex: none;
  border-right: 2px solid #bcbcbc;
  display: flex;
  justify-content: flex-end;
  padding: 8px 4px 0 0;
`;
const Row = styled.div`
  height: ${(p) => p.$h}px;
  display: grid;
  grid-template-columns: 60px 38px 204px 168px 416px 187px;
  align-items: stretch;
`;
const RowNum = styled.div`
  display: flex;
  align-items: center;
  justify-content: center;
  padding: 2px 10px 0 0;
  background: #e6e6e6;
  border-right: 2px solid #a8a8a8;
  border-bottom: 2px solid #bfbfbf;
  font-size: 34px;
  line-height: 1;
  letter-spacing: -2px;
`;
const Cell = styled.div`
  grid-column: ${(p) => p.$col};
  grid-row: 1;
  display: flex;
  align-items: center;
  justify-content: ${(p) => (p.$spread ? "space-between" : p.$right ? "flex-end" : "flex-start")};
  padding: ${(p) => (p.$pad ? p.$pad : "0 0 0 7px")};
  font-family: ${arial};
  font-size: ${(p) => p.$s || 31.5}px;
  font-weight: ${(p) => (p.$b ? 700 : 400)};
  line-height: 1.1;
  color: ${(p) => (p.$b ? "#17265f" : "#333")};
  ${(p) => p.$line && css`box-shadow: inset 0 -5px ${p.$line};`}
`;
const Circles = styled.svg`
  position: absolute;
  left: 838px;
  top: 180px;
`;
const FormulaCard = styled.div`
  position: absolute;
  left: 473px;
  top: 419px;
  width: 866px;
  height: 226px;
  background: #00174d;
  color: #fff;
  display: flex;
  padding-left: 17px;
  font-family: ${arial};
  font-size: 94px;
  line-height: 188px;
`;
const Fraction = styled.div`
  width: 110px;
  margin-left: 31px;
  display: flex;
  flex-direction: column;
  align-items: center;
  font: italic 90px/88px "Liberation Serif", serif;
`;
const FracTop = styled.div`
  height: 89px;
  line-height: 66px;
  padding-right: 4px;
`;
const FracBar = styled.i`
  width: 110px;
  height: 8px;
  flex: none;
  background: #fff;
`;
const Root = styled.div`
  display: flex;
  padding-top: 19px;
  width: 110px;
  span { margin-left: -52px; line-height: 82px; }
`;

const colWidths = [38, 204, 168, 416, 187, 239, 168, 145, 162, 168, 168, 168, 168, 169, 167, 168, 168, 168];
const rowHeights = [55.5, 39.5, 39, 44, 43, 42, 42, 42, 42, 42, 39, 39.5, 40.5, 41].concat(Array(17).fill(39.8));
const data = [78000, 90000, 75000, 117000, 105000, 96000, 89500, 102300, 80000];
const stats = {
  5: ["Sample mean", 195, "92,533"],
  6: ["Sample standard deviation", 392, "13,932"],
  7: ["Standard error", 217, "4,644"],
};

const Scroll = styled.div`
  flex: 1;
  padding: 3px 0 0 8px;
  background: #e6e6e6;
  display: flex;
  flex-direction: column;
  justify-content: space-between;
`;
const ScrollBtn = styled.div`
  height: ${(p) => p.$h}px;
  background: #fdfdfd;
  border: 2px solid #c6c6c6;
  display: grid;
  place-items: center;
`;
const ScrollTrack = styled.div`
  flex: 1;
  margin: 3px 0 0;
  background: #dedede;
`;
const Thumb = styled.div`
  height: 1198px;
  border: 2px solid #b9b9b9;
  background: #fff;
`;

const SheetTabs = styled.div`
  height: 64px;
  flex: none;
  display: flex;
  align-items: stretch;
  background: #e2e2e2;
  border-top: 3px solid #b0b0b0;
  font-size: 33px;
  line-height: 42px;
  color: #3a3a3a;
`;
const SheetTab = styled.div`
  width: ${(p) => p.$w}px;
  height: 54px;
  flex: none;
  padding: 0 0 0 ${(p) => p.$pl}px;
  border-right: 2px solid #8f8f8f;
  ${(p) => p.$active && css`
    background: #fdfdfd;
    color: #1f7145;
    font-weight: 700;
    border-bottom: 5px solid #1f7145;
  `}
`;
const TabNav = styled.div`
  width: 206px;
  flex: none;
  padding: 20px 0 0 50px;
  border-right: 2px solid #8f8f8f;
  height: 52px;
`;
const HScroll = styled.div`
  width: 1268px;
  height: 36px;
  margin: 9px 0 0 960px;
  border: 2px solid #a5a5a5;
  background: #f2f2f2;
  display: flex;
  align-items: center;
`;
const PlusCircle = styled.svg`
  margin: 10px 0 0 69px;
`;
const StatusBar = styled.div`
  height: 41px;
  flex: none;
  background: #dcdcdc;
  border-top: 2px solid #b5b5b5;
  display: flex;
  align-items: center;
  padding: 4px 30px 0 7px;
  font-size: 28px;
  color: #444;
`;
const ViewIcons = styled.div`
  display: flex;
  gap: 56px;
  margin-left: 2577px;
`;

function ExcelView() {
  return (
    <Excel>
      <GreenBar>
        <Circuit width="3360" height="80" viewBox="0 179 3360 80">
          <circle cx="2128" cy="225" r="44" strokeWidth="9" />
          <path d="M2114 256V212h30l-8 8M2118 214l32 38" strokeWidth="9" />
          <circle cx="2248" cy="211" r="8" strokeWidth="5" />
          <path d="M2258 211h248l72 50M2352 260l26-21h228M2626 239l30 22" strokeWidth="10" />
          <circle cx="2615" cy="239" r="8" strokeWidth="5" />
          <path d="M2629 178l110 82M3030 262l56-71h274M3196 260l54-70M3226 260l58-68" strokeWidth="9" />
          <circle cx="2791" cy="180" r="67" strokeWidth="15" />
          <path d="M2762 200l26-26 4 24 26-24" strokeWidth="10" />
        </Circuit>
        <QuickIcons>
          <QuickIcon /><QuickIcon /><QuickIcon $dim /><QuickIcon $dim /><QuickIcon />
        </QuickIcons>
        <RibbonTabs>
          <Fit w={48} ml={42}>File</Fit>
          <HomeTab><Fit w={82}>Home</Fit></HomeTab>
          <Fit w={80} ml={30}>Insert</Fit>
          <Fit w={158} ml={60}>Page Layout</Fit>
          <Fit w={124} ml={66}>Formulas</Fit>
          <Fit w={62} ml={62}>Data</Fit>
          <Fit w={96} ml={65}>Review</Fit>
          <Fit w={68} ml={64}>View</Fit>
          <Fit w={156} ml={60}>Power Pivot</Fit>
          <svg width="120" height="78" viewBox="0 0 120 78"><path d="M78 42c-10-8-8-22 6-22s16 14 6 22v8H78zM79 55h10" fill="none" stroke="#8bb09d" strokeWidth="2.500" /></svg>
          <Fit w={398} ml={-4}>Tell me what you want to do</Fit>
          <ShareIcon width="38" height="78" viewBox="0 0 38 78"><g fill="none" stroke="#a9c3b5" strokeWidth="2.500"><circle cx="17" cy="32" r="12" /><path d="M1 60c1-10 6-15 14-16M29 46v18M20 55h18" /></g></ShareIcon>
          <Fit w={77} ml={20}>Share</Fit>
        </RibbonTabs>
      </GreenBar>
      <RibbonArea />
      <FormulaBar>
        <WhiteBox $w={265} $pl={12} $pr={17}><Fit w={39}>A1</Fit><Arrow /></WhiteBox>
        <Grip><svg width="4" height="30" viewBox="0 0 4 30"><path d="M2 0v30" stroke="#999" strokeWidth="3" strokeDasharray="4 8" /></svg></Grip>
        <WhiteBox $w={288} $ml={1} $pl={28} $pr={34}>
          <svg width="32" height="28" viewBox="0 0 32 28"><path d="M2 1l28 26M30 1L2 27" stroke="#b5b5b5" strokeWidth="4" /></svg>
          <svg width="36" height="28" viewBox="0 0 36 28"><path d="M2 15l11 10L33 1" fill="none" stroke="#b5b5b5" strokeWidth="5" /></svg>
          <Fx>f<small>x</small></Fx>
        </WhiteBox>
        <WhiteBox $w={2716} $ml={6} $pr={8}>
          <span />
          <svg width="20" height="14" viewBox="0 0 20 14"><path d="M2 2l8 9 8-9" fill="none" stroke="#555" strokeWidth="4.500" /></svg>
        </WhiteBox>
      </FormulaBar>
      <SheetArea>
        <Sheet>
          <ColHeads>
            <Corner><svg width="32" height="32" viewBox="0 0 32 32"><path d="M32 0v32H0z" fill="#b8b8b8" /></svg></Corner>
            {colWidths.map((w, i) => <ColHead key={i} $w={w}>{String.fromCharCode(65 + i)}</ColHead>)}
          </ColHeads>
          {rowHeights.map((h, i) => {
            const n = i + 1;
            const s = stats[n];
            return (
              <Row key={n} $h={h}>
                <RowNum>{n}</RowNum>
                {n === 1 && <Cell $col="3" $b $s={42}><Fit w={572}>Confidence intervals, t-score</Fit></Cell>}
                {n === 2 && <Cell $col="3" $b $pad="0 0 0 5px"><Fit w={297}>Data scientist salary</Fit></Cell>}
                {n === 4 && <Cell $col="3" $b $right $pad="0 5px 0 0" $line="#2c3e70"><Fit w={115}>Dataset</Fit></Cell>}
                {n > 4 && n < 14 && (
                  <Cell $col="3" $spread $pad="2px 16px 0 14px" $line={n === 13 ? "#9aa6bf" : undefined}>
                    <span>$</span>
                    <Fit w={data[n - 5] > 99999 ? 108 : 93}>{data[n - 5].toLocaleString("en-US")}</Fit>
                  </Cell>
                )}
                {s && <Cell $col="5" $b $pad="2px 0 0 6px"><Fit w={s[1]}>{s[0]}</Fit></Cell>}
                {s && <Cell $col="6" $spread $pad="2px 16px 0 14px"><span>$</span><Fit w={n === 7 ? 76 : 93}>{s[2]}</Fit></Cell>}
              </Row>
            );
          })}
          <Circles width="304" height="223" viewBox="840 822 300 220" preserveAspectRatio="none" fill="none" stroke="#b30a0e" strokeWidth="7">
            <path d="M920 840C955 831 1000 834 1040 846C1085 858 1112 872 1114 892C1114 912 1075 931 1040 930C990 934 930 934 905 928C870 920 856 905 857 890C860 865 890 848 930 840C950 835 975 834 985 836" />
            <path d="M915 934C950 924 1000 922 1040 930C1085 938 1112 956 1114 978C1112 998 1080 1010 1045 1014C1010 1019 950 1020 915 1013C870 1004 856 990 857 976C860 955 885 940 915 934C950 924 1010 922 1050 930" />
            <path d="M920 931h130" strokeWidth="11" />
          </Circles>
          <FormulaCard>
            <Fit w={668}>standard error =</Fit>
            <Fraction>
              <FracTop>s</FracTop>
              <FracBar />
              <Root>
                <svg width="110" height="80" viewBox="0 0 110 80" fill="none" stroke="#fff"><path d="M2 44l10-5" strokeWidth="4" /><path d="M12 38l16 40" strokeWidth="8" /><path d="M27 78L50 3h60" strokeWidth="4.500" /></svg>
                <span>n</span>
              </Root>
            </Fraction>
          </FormulaCard>
        </Sheet>
        <Scroll>
          <ScrollBtn $h={39}><svg width="18" height="12" viewBox="0 0 18 12"><path d="M0 12h18L9 0z" fill="#777" /></svg></ScrollBtn>
          <ScrollTrack><Thumb /></ScrollTrack>
          <ScrollBtn $h={35}><svg width="18" height="12" viewBox="0 0 18 12"><path d="M0 0h18L9 12z" fill="#666" /></svg></ScrollBtn>
        </Scroll>
      </SheetArea>
      <SheetTabs>
        <TabNav><svg width="66" height="18" viewBox="0 0 66 18"><path d="M9 0v18L0 9zM58 0v18l9-9z" fill="#a0a0a0" /></svg></TabNav>
        <SheetTab $w={180} $pl={29}><Fit w={119}>Salaries</Fit></SheetTab>
        <SheetTab $w={216} $pl={24} $active><Fit w={164}>Mean, std</Fit></SheetTab>
        <SheetTab $w={377} $pl={32}><Fit w={308}>Confidence interval</Fit></SheetTab>
        <PlusCircle width="42" height="42" viewBox="0 0 42 42" fill="none" stroke="#666" strokeWidth="2.500"><circle cx="21" cy="21" r="20" /><path d="M21 11v20M11 21h20" strokeWidth="3.500" /></PlusCircle>
        <HScroll><svg width="40" height="32" viewBox="0 0 40 32"><path d="M22 5v20L12 15z" fill="#444" /><path d="M38 0v32" stroke="#a5a5a5" strokeWidth="2" /></svg></HScroll>
      </SheetTabs>
      <StatusBar>
        <Fit w={74}>Ready</Fit>
        <ViewIcons>
          <svg width="30" height="30" viewBox="0 0 30 30" fill="none" stroke="#555" strokeWidth="2.500"><rect x="-25" y="-5" width="84" height="40" fill="#b5b5b5" stroke="none" /><path d="M1 1h28v28H1zM10 1v28M20 1v28M1 10h28M1 20h28" /></svg>
          <svg width="30" height="30" viewBox="0 0 30 30" fill="none" stroke="#555" strokeWidth="2.500"><path d="M1 1h28v28H1zM7 7h16v16H7zM11 12h8M11 17h8" /></svg>
          <svg width="30" height="30" viewBox="0 0 30 30" fill="none" stroke="#555" strokeWidth="2.500"><path d="M1 1h28v28H1z" /></svg>
        </ViewIcons>
        <svg width="200" height="30" viewBox="0 0 200 30"><path d="M197 0v30" stroke="#333" strokeWidth="10" /></svg>
        <svg width="150" height="30" viewBox="0 0 150 30"><path d="M148 4v22" stroke="#333" strokeWidth="4" /></svg>
        <Fit w={64} ml={50}>100%</Fit>
      </StatusBar>
    </Excel>
  );
}

/* ================= player overlay ================= */
const player = '"Open Sans", "Noto Sans", sans-serif';
const TopShade = styled.div`
  position: absolute;
  inset: 0 0 auto 0;
  height: 345px;
  background: linear-gradient(rgba(20,23,28,.69) 0, rgba(20,23,28,.6) 38px, rgba(20,23,28,.39) 108px, rgba(20,23,28,.32) 140px, rgba(20,23,28,.2) 195px, rgba(20,23,28,.1) 245px, rgba(20,23,28,.04) 290px, rgba(20,23,28,0) 345px);
`;
const BottomShade = styled.div`
  position: absolute;
  inset: auto 0 0 0;
  height: 210px;
  background: linear-gradient(rgba(20,23,28,0) 0, rgba(20,23,28,.05) 35px, rgba(20,23,28,.13) 66px, rgba(20,23,28,.25) 95px, rgba(20,23,28,.37) 130px, rgba(20,23,28,.56) 170px, rgba(20,23,28,.77) 210px);
`;
const Watermark = styled.div`
  position: absolute;
  left: 2823px;
  top: 1799px;
  width: 527px;
  height: 80px;
  border-radius: 8px;
  background: #0b8b9b;
  border-top: 2px solid #3ea7b2;
  display: flex;
  align-items: center;
  padding-left: 20px;
  font: 500 51px/82px "Inter", sans-serif;
  color: #cfd0d0;
  filter: blur(0.8px);
`;
const Lecture = styled.header`
  position: absolute;
  left: 76px;
  right: 89px;
  top: 38px;
  display: flex;
  align-items: flex-start;
  font-family: ${player};
  font-weight: 600;
`;
const Titles = styled.div`
  margin-left: 52px;
  color: rgba(255, 255, 255, 0.84);
`;
const Title = styled.div`
  font-size: 55px;
  line-height: 69px;
  height: 81px;
`;
const Subtitle = styled.div`
  font-size: 40px;
  line-height: 54px;
  height: 54px;
  color: #fbfbfb;
`;
const Dashboard = styled.div`
  margin: 35px 0 0 auto;
  font-size: 44px;
  line-height: 50px;
  color: rgba(255, 255, 255, 0.84);
`;
const ListIcon = styled.svg`
  margin-top: 14px;
`;
const FolderTip = styled.div`
  position: absolute;
  left: 48px;
  top: 200px;
  width: 125px;
  height: 107px;
  border-radius: 7px;
  background: rgba(34, 139, 161, 0.93);
  display: grid;
  place-items: center;
  padding-right: 2px;
  &::before {
    content: "";
    position: absolute;
    left: 36px;
    top: -15px;
    border: 15px solid transparent;
    border-top: 0;
    border-bottom-color: #2c8fa3;
  }
`;
const Caption = styled.div`
  position: absolute;
  left: 1316px;
  top: 1566px;
  width: 728px;
  height: 121px;
  padding: 0 0 0 23px;
  background: #505155;
  color: #fff;
  font-family: ${arial};
  font-size: 80px;
  line-height: 109px;
`;
const Progress = styled.div`
  position: absolute;
  left: 39px;
  top: 1746px;
  width: 3281px;
  height: 19px;
  background: rgba(247, 247, 248, 0.6);
`;
const Buffered = styled.div`
  width: 1494px;
  height: 19px;
  background: #cacbd0;
`;
const Played = styled.div`
  width: 540px;
  height: 19px;
  background: #ec5252;
`;
const Marker = styled.i`
  position: absolute;
  left: ${(p) => p.$x}px;
  top: -9px;
  width: 18px;
  height: 36px;
  border-radius: 9px;
  background: #686f7a;
`;
const Controls = styled.footer`
  position: absolute;
  left: 0;
  right: 0;
  top: 1802px;
  height: 72px;
  padding-left: 71px;
  display: flex;
  align-items: center;
  font-family: ${player};
  font-size: 40px;
  font-weight: 600;
  line-height: 55px;
  color: #e4e5e7;
  fill: #e2e3e5;
`;
const Ctl = styled.div`
  flex: none;
  margin-left: ${(p) => p.$ml}px;
  width: ${(p) => p.$w}px;
`;
const Speed = styled.div`
  width: 108px;
  height: 54px;
  margin-left: 37px;
  border-radius: 8px;
  background: rgba(235, 236, 239, 0.92);
  color: #2f3540;
  display: flex;
  padding-left: 28px;
  em { font-style: normal; background: #c0c2c6; width: 22px; text-align: center; }
  span { margin-left: 3px; font-size: 37px; }
`;
const Mark = styled.div`
  flex: none;
  height: 54px;
  width: ${(p) => p.$w}px;
  margin-left: ${(p) => p.$ml}px;
  background: rgba(205, 207, 220, 0.3);
  color: #f7f8fa;
`;

function Player() {
  return (
    <>
      <Lecture>
        <ListIcon width="40" height="40" viewBox="0 0 40 40" fill="#d8e4dd"><circle cx="5" cy="5" r="5" /><circle cx="5" cy="20" r="5" /><circle cx="5" cy="35" r="5" /><rect x="16" y="2.500" width="24" height="5" rx="2.500" /><rect x="16" y="17.500" width="24" height="5" rx="2.500" /><rect x="16" y="32.500" width="24" height="5" rx="2.500" /></ListIcon>
        <Titles>
          <Title><Fit w={1561}>Confidence Intervals; Population Variance Unknown; t-score</Fit></Title>
          <Subtitle><Fit w={410}>Section 13, Lecture 63</Fit></Subtitle>
        </Titles>
        <Dashboard><Fit w={366}>Go to Dashboard</Fit></Dashboard>
      </Lecture>
      <FolderTip>
        <svg width="42" height="32" viewBox="0 0 42 32" fill="#fff"><path d="M0 26V4c0-2 1-4 4-4h8c3 0 4 2 4 5h13c3 0 4 2 4 5v1H13c-3 0-5 1-6 4z" /><path d="M2 32l7-14c1-3 3-4 5-4h25c2 0 3 1 2 3l-6 12c-1 2-3 3-5 3z" /></svg>
      </FolderTip>
      <Caption><Fit w={679}>dollars respectively.</Fit></Caption>
      <Progress>
        <Buffered><Played /></Buffered>
        <Marker $x={773} /><Marker $x={1414} /><Marker $x={3014} />
      </Progress>
      <Controls>
        <svg width="49" height="54" viewBox="0 0 49 54"><path d="M0 1l49 26L0 54z" /></svg>
        <Ctl $ml={90} $w={45}><svg width="45" height="54" viewBox="0 0 45 54"><path d="M22 0v11a21 21 0 1 1-22 21h7a15.500 15.500 0 1 0 15-14.500V24L4 12z" /></svg></Ctl>
        <Speed><em>1</em><span>×</span></Speed>
        <Ctl $ml={48} $w={46}><svg width="46" height="54" viewBox="0 0 46 54"><path d="M23 0v11a21 21 0 1 0 22 21h-7a15.500 15.500 0 1 1-15-14.500V24l18-12z" /></svg></Ctl>
        <Mark $ml={60} $w={77}><Fit w={77}>0:45</Fit></Mark>
        <Mark $ml={9} $w={15}><Fit w={15}>/</Fit></Mark>
        <Mark $ml={9} $w={78}><Fit w={78}>4:36</Fit></Mark>
        <Mark $ml={308} $w={10} />
        <Ctl $ml={63} $w={34}><svg width="34" height="40" viewBox="0 0 34 40"><path fillRule="evenodd" d="M3 0h18v13h13v24a2.500 2.500 0 0 1-3 3H3a3 3 0 0 1-3-3V3a3 3 0 0 1 3-3zm20 1l10 9.500H23zM8 17v3h18v-3zm0 6v3h18v-3zm0 6v3h18v-3z" /></svg></Ctl>
        <Fit w={192} ml={14}>Transcript</Fit>
        <Ctl $ml={126} $w={46}><svg width="46" height="46" viewBox="0 0 46 46"><circle cx="23" cy="23" r="23" /><path d="M14.500 17c0-12 18-11 17 0-1 6-8 5-8.500 13" fill="none" stroke="#77787b" strokeWidth="6" /><path d="M20 33h6v6h-6z" fill="#77787b" /></svg></Ctl>
        <Fit w={234} ml={17}>Browse Q&amp;A</Fit>
        <Ctl $ml={130} $w={29}><svg width="29" height="39" viewBox="0 0 29 39"><path d="M3 0h23a3 3 0 0 1 3 3v36L14.500 29 0 39V3a3 3 0 0 1 3-3z" /></svg></Ctl>
        <Fit w={280} ml={20}>Add Bookmark</Fit>
        <Fit w={172} ml={358}>Continue</Fit>
        <Ctl $ml={18} $w={27}><svg width="27" height="32" viewBox="0 0 27 32"><path d="M0 0l20 16L0 32zM22 0h5v32h-5z" /></svg></Ctl>
        <Ctl $ml={92} $w={54}><svg width="54" height="48" viewBox="0 0 54 48"><path d="M0 16h10L25 4v40L10 32H0z" /><path d="M29 14a10 10 0 0 1 0 20zM29 0c34 2 34 46 0 48v-6c25-3 25-33 0-36z" /><path d="M31 10c18 3 18 25 0 28" fill="none" stroke="#e2e3e5" strokeWidth="4" /></svg></Ctl>
        <Ctl $ml={54} $w={59}><svg width="59" height="48" viewBox="0 0 59 48"><rect width="59" height="48" rx="6" fill="#d9e3e6" /><path d="M27 18c-3-7-15-6-15 6s12 13 15 6M49 18c-3-7-15-6-15 6s12 13 15 6" fill="none" stroke="#155963" strokeWidth="5.500" /></svg></Ctl>
        <Ctl $ml={52} $w={56}><svg width="56" height="60" viewBox="0 0 56 60"><g transform="translate(28 30)" fill="#d3dee1"><circle r="17" fill="none" stroke="#d3dee1" strokeWidth="11" />{[0, 60, 120, 180, 240, 300].map((a) => <path key={a} d="M-7-20L-4.500-30h9L7-20z" transform={`rotate(${a})`} />)}</g></svg></Ctl>
        <Ctl $ml={55} $w={59}><svg width="59" height="60" viewBox="0 0 59 60" fill="none" stroke="#e2e8ea" strokeWidth="7" strokeLinecap="round" strokeLinejoin="round"><path d="M34 24L55 4M39 4h16v16M25 36L4 56M4 40v16h16" /></svg></Ctl>
      </Controls>
    </>
  );
}

export default function App() {
  return (
    <Page>
      <Global />
      <Browser />
      <Stage>
        <ExcelView />
        <Watermark>
          <Fit w={94}>365</Fit>
          <svg width="46" height="78" viewBox="0 0 46 78" fill="#b9bcbc" stroke="#b9bcbc" strokeWidth="3"><path d="M32 54L49 14" /><circle cx="49" cy="13" r="5" /><circle cx="32" cy="56" r="5" /></svg>
          <Fit w={334} ml={13}>DataScience</Fit>
        </Watermark>
        <TopShade />
        <BottomShade />
        <Player />
      </Stage>
    </Page>
  );
}
